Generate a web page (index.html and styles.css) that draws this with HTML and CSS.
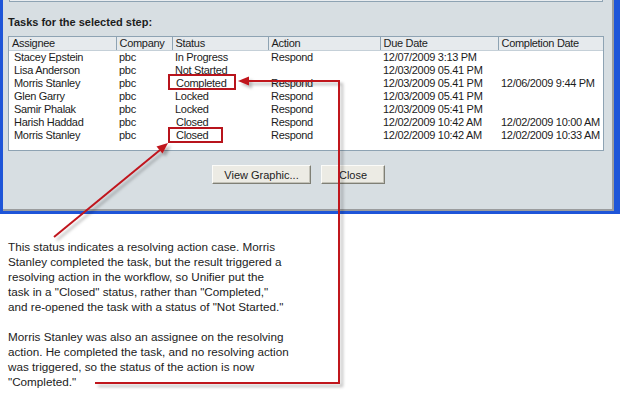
FILE: index.html
```html
<!DOCTYPE html>
<html lang="en">
<head>
  <meta charset="UTF-8" />
  <title>Tasks for the selected step</title>
  <link rel="stylesheet" href="styles.css">
</head>
<body>

<!-- Dialog window -->
<div class="window">
  <div class="dialog">
    <div class="panel-stub"></div>

    <div class="section-title">Tasks for the selected step:</div>

    <div class="grid-box">
      <table class="grid">
        <colgroup>
          <col class="c-assignee"><col class="c-company"><col class="c-status">
          <col class="c-action"><col class="c-due"><col class="c-done">
        </colgroup>
        <thead>
          <tr>
            <th>Assignee</th><th>Company</th><th>Status</th>
            <th>Action</th><th>Due Date</th><th>Completion Date</th>
          </tr>
        </thead>
        <tbody>
          <tr><td class="name">Stacey Epstein</td><td>pbc</td><td>In Progress</td><td>Respond</td><td>12/07/2009 3:13 PM</td><td></td></tr>
          <tr><td class="name">Lisa Anderson</td><td>pbc</td><td>Not Started</td><td></td><td>12/03/2009 05.41 PM</td><td></td></tr>
          <tr><td class="name">Morris Stanley</td><td>pbc</td><td class="st">Completed</td><td>Respond</td><td>12/03/2009 05.41 PM</td><td>12/06/2009 9:44 PM</td></tr>
          <tr><td class="name">Glen Garry</td><td>pbc</td><td>Locked</td><td>Respond</td><td>12/03/2009 05.41 PM</td><td></td></tr>
          <tr><td class="name">Samir Phalak</td><td>pbc</td><td>Locked</td><td>Respond</td><td>12/03/2009 05:41 PM</td><td></td></tr>
          <tr><td class="name">Harish Haddad</td><td>pbc</td><td class="st">Closed</td><td>Respond</td><td>12/02/2009 10:42 AM</td><td>12/02/2009 10:00 AM</td></tr>
          <tr><td class="name">Morris Stanley</td><td>pbc</td><td class="st">Closed</td><td>Respond</td><td>12/02/2009 10:42 AM</td><td>12/02/2009 10:33 AM</td></tr>
        </tbody>
      </table>
    </div>

    <div class="button-row">
      <button class="btn btn-wide">View Graphic...</button>
      <button class="btn">Close</button>
    </div>
  </div>
</div>

<!-- Callout text -->
<div class="note">
  <p>This status indicates a resolving action case. Morris<br>
  Stanley completed the task, but the result triggered a<br>
  resolving action in the workflow, so Unifier put the<br>
  task in a "Closed" status, rather than "Completed,"<br>
  and re-opened the task with a status of "Not Started."</p>
  <p>Morris Stanley was also an assignee on the resolving<br>
  action. He completed the task, and no resolving action<br>
  was triggered, so the status of the action is now<br>
  "Completed."</p>
</div>

<!-- Annotation overlay: boxes and arrows -->
<svg class="callouts" width="620" height="397" viewBox="0 0 620 397">
  <defs>
    <filter id="shade" x="-10%" y="-10%" width="130%" height="130%">
      <feDropShadow dx="3" dy="3" stdDeviation="1.5" flood-color="#000" flood-opacity="0.28"/>
    </filter>
  </defs>
  <g fill="none" stroke="#b8141c" stroke-width="2">
    <rect x="169" y="75" width="66" height="14"/>
    <rect x="169" y="128" width="53" height="14"/>
  </g>
  <g filter="url(#shade)">
    <polyline points="95,383 339,383 339,81 247,81" fill="none" stroke="#c0141c" stroke-width="2"/>
    <polygon points="238,81 249,76.5 249,85.5" fill="#c0141c"/>
    <line x1="54" y1="237" x2="160" y2="150" stroke="#c0141c" stroke-width="2"/>
    <polygon points="168,143 162.5,153.5 156.5,146.5" fill="#c0141c"/>
  </g>
</svg>

</body>
</html>
```

FILE: styles.css
```css
/* ----------  BASE  ---------- */
:root {
  --xp-blue:     #1e55d8;
  --dlg-bg:      #d7dee2;
  --grid-line:   #8ea3b3;
  --head-bg:     #e6eaed;
  --callout-red: #c0141c;
  --text:        #1c1c1c;
}

*{box-sizing:border-box}

body{
  margin:0;
  position:relative;
  width:620px; height:397px;
  overflow:hidden;
  background:#fff;
  font-family:'Liberation Sans',Arial,sans-serif;
  color:var(--text);
}

/* ----------  WINDOW FRAME  ---------- */
.window{
  width:620px; height:214px;
  border:0 solid var(--xp-blue);
  border-width:0 6px 3px 3px;
  background:var(--dlg-bg);
}
.dialog{
  height:100%;
  padding:0 8px 0 5px;
  border-right:2px solid #9a9c9e;
  border-bottom:2px solid #9a9c9e;
}

.panel-stub{
  height:2px; margin:0 1px;
  border:1px solid var(--grid-line); border-top:none;
  background:#e9edf0;
}

.section-title{
  margin:14px 0 7px;
  font-size:11px; font-weight:bold;
  line-height:13px;
}

/* ----------  TASK GRID  ---------- */
.grid-box{
  height:115px;
  border:1px solid var(--grid-line);
  background:#fff;
}
.grid{
  width:100%;
  table-layout:fixed;
  border-collapse:collapse;
  font-size:11px;
  letter-spacing:-0.3px;
}
.c-assignee{width:107px}
.c-company {width:56px}
.c-status  {width:96px}
.c-action  {width:112px}
.c-due     {width:118px}
.c-done    {width:105px}

.grid th{
  height:13px; padding:0 0 0 3px;
  font-weight:normal; text-align:left;
  line-height:12px;
  background:var(--head-bg);
  border-right:1px solid var(--grid-line);
  border-bottom:1px solid #c5d0d8;
  white-space:nowrap; overflow:hidden;
}
.grid th:last-child{border-right:none}

.grid td{
  height:13px; padding:0 0 0 3px;
  line-height:13px;
  white-space:nowrap; overflow:hidden;
}
.grid td.name{padding-left:5px}
.grid td.st{padding-left:4px}

/* ----------  BUTTONS  ---------- */
.button-row{
  display:flex; gap:10px;
  margin:14px 0 0 204px;
}
.btn{
  height:19px; width:64px; padding:0;
  font-family:inherit; font-size:11px; color:var(--text);
  background:#ecebe4;
  border:1px solid;
  border-color:#fbfbf8 #7f7f75 #7f7f75 #fbfbf8;
  box-shadow:inset -1px -1px 0 #c3c2b8;
}
.btn-wide{width:99px}

/* ----------  CALLOUT TEXT  ---------- */
.note{
  margin:25px 0 0 8px;
  font-size:11.7px; line-height:15px;
  color:#222;
  white-space:nowrap;
}
.note p{margin:0 0 15px}

.callouts{
  position:absolute; top:0; left:0;
  pointer-events:none;
}
```
